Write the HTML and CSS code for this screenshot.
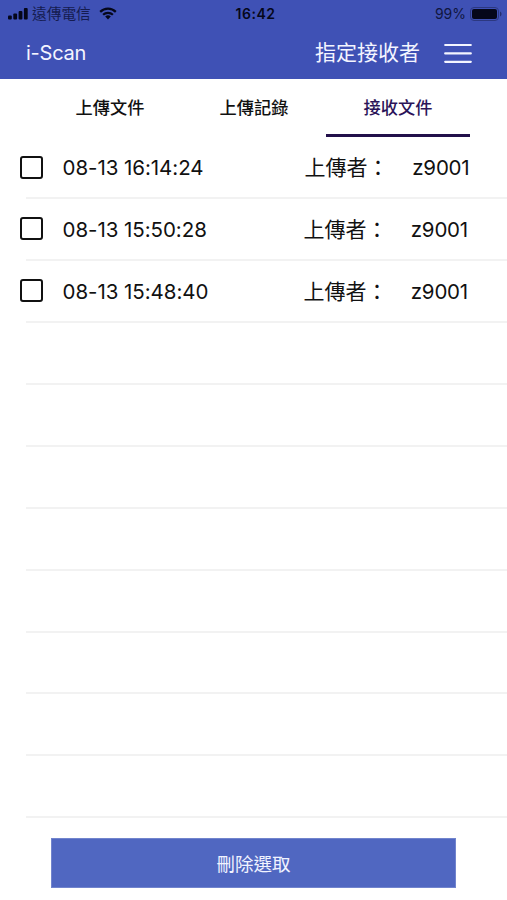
FILE: index.html
```
<!DOCTYPE html>
<html lang="zh-Hant">
<head>
    <meta charset="UTF-8">
    <meta name="viewport" content="width=device-width, initial-scale=1.0">
    <title>i-Scan</title>
    <link rel="stylesheet" href="styles.css">
</head>
<body>
    <header class="header">
        <!-- Status bar -->
        <div class="status-bar">
            <div class="status-left">
                <svg class="signal" width="20" height="12" viewBox="0 0 20 12">
                    <rect x="0" y="7.5" width="3.8" height="4" rx="1"/>
                    <rect x="5.3" y="5.5" width="3.8" height="6" rx="1"/>
                    <rect x="10.6" y="3" width="3.8" height="8.5" rx="1"/>
                    <rect x="15.9" y="0" width="3.8" height="11.5" rx="1"/>
                </svg>
                <span class="carrier">遠傳電信</span>
                <svg class="wifi" width="18" height="13" viewBox="0 0 18 13">
                    <path d="M1.2 4.9a11 11 0 0 1 15.6 0M4.1 7.8a7 7 0 0 1 9.8 0" fill="none" stroke="#05071a" stroke-width="2.2"/>
                    <path d="M9 12.4L6.2 9.6a4 4 0 0 1 5.6 0z"/>
                </svg>
            </div>
            <span class="clock">16:42</span>
            <div class="status-right">
                <span class="percent">99%</span>
                <svg class="battery" width="32" height="14" viewBox="0 0 32 14">
                    <rect x="0.5" y="0.5" width="28" height="13" rx="3.5" fill="none" stroke="#2c3880"/>
                    <rect x="2" y="2" width="25" height="10" rx="2"/>
                    <path d="M30 4.5c2 .8 2 4.2 0 5z" fill="#252f70"/>
                </svg>
            </div>
        </div>
        <!-- Title bar -->
        <div class="nav-bar">
            <h1 class="title">i-Scan</h1>
            <a class="receiver">指定接收者</a>
            <svg class="menu-icon" width="28" height="21" viewBox="0 0 28 21">
                <path d="M1.2 2h25.6M1.2 10.4h25.6M1.2 18.8h25.6"/>
            </svg>
        </div>
    </header>

    <nav class="tabs">
        <a class="tab">上傳文件</a>
        <a class="tab">上傳記錄</a>
        <a class="tab active">接收文件</a>
    </nav>

    <ul class="file-list">
        <li class="row first">
            <span class="checkbox"></span>
            <span class="time">08-13 16:14:24</span>
            <span class="label">上傳者：</span>
            <span class="user">z9001</span>
        </li>
        <li class="row">
            <span class="checkbox"></span>
            <span class="time">08-13 15:50:28</span>
            <span class="label">上傳者：</span>
            <span class="user">z9001</span>
        </li>
        <li class="row">
            <span class="checkbox"></span>
            <span class="time">08-13 15:48:40</span>
            <span class="label">上傳者：</span>
            <span class="user">z9001</span>
        </li>
        <!-- Empty rows -->
        <li class="row"></li>
        <li class="row"></li>
        <li class="row"></li>
        <li class="row"></li>
        <li class="row"></li>
        <li class="row"></li>
        <li class="row"></li>
        <li class="row"></li>
    </ul>

    <div class="footer">
        <button class="btn-delete">刪除選取</button>
    </div>
</body>
</html>
```
FILE: styles.css
```
* {
    box-sizing: border-box;
}

body {
    margin: 0;
    height: 900px;
    overflow: hidden;
    background-color: #fff;
    color: #111;
    font-family: Inter, "Noto Sans CJK TC", sans-serif;
}

/* Header */
.header {
    height: 79px;
    background-color: #3f51b5;
}

.status-bar {
    display: grid;
    grid-template-columns: 1fr auto 1fr;
    align-items: center;
    height: 27px;
    padding: 0 5px 0 8px;
    color: #05071a;
    fill: #05071a;
    font-size: 14px;
    line-height: 27px;
}

.status-left,
.status-right {
    display: flex;
    align-items: center;
}

.status-right {
    justify-content: flex-end;
}

.carrier {
    margin-left: 4px;
    padding-top: 2px;
    color: #151c50;
    font-size: 14.7px;
    line-height: 25px;
}

.wifi {
    margin-left: 8px;
}

.clock {
    padding-left: 1px;
    font-weight: 600;
    letter-spacing: 0.5px;
}

.percent {
    margin-right: 4px;
    color: #10163f;
}

.nav-bar {
    display: flex;
    align-items: center;
    height: 52px;
    padding: 0 35px 0 26px;
    color: #f4f5ff;
}

.title {
    flex: 1;
    margin: 0;
    font-size: 20px;
    font-weight: 400;
    letter-spacing: -0.25px;
}

.receiver {
    font-size: 21px;
    line-height: 52px;
}

.menu-icon {
    margin-left: 24px;
    fill: none;
    stroke: #f4f5ff;
    stroke-width: 2.2;
    stroke-linecap: round;
}

/* Tabs */
.tabs {
    display: flex;
    height: 58px;
    padding: 0 37px 0 38px;
}

.tab {
    flex: 1;
    border-bottom: 3px solid transparent;
    color: #111;
    font-size: 17.2px;
    font-weight: 500;
    line-height: 58px;
    text-align: center;
}

.tab.active {
    border-bottom-color: #22104a;
    color: #2b1459;
}

/* File list */
.file-list {
    margin: 0;
    padding: 0 0 0 26px;
    list-style: none;
}

.row {
    display: grid;
    grid-template-columns: 36.5px 241px 1fr auto;
    align-items: center;
    height: 61.95px;
    padding-right: 39px;
    border-bottom: 2px solid #f2f2f2;
    font-size: 20.5px;
    line-height: 58px;
}

.row.first {
    grid-template-columns: 36.5px 242px 1fr auto;
    padding-right: 37.5px;
}

.checkbox {
    width: 23px;
    height: 23px;
    margin-left: -6px;
    border: 2.5px solid #111;
    border-radius: 3px;
}

.time,
.label,
.user {
    padding-top: 2px;
}

.time {
    letter-spacing: -0.05px;
}

.label {
    font-size: 21px;
}

.user {
    letter-spacing: -0.2px;
}

/* Footer */
.footer {
    padding: 20px 51px 0;
}

.btn-delete {
    display: block;
    width: 405px;
    height: 50px;
    padding: 0;
    border: 1px solid #7184cd;
    background-color: #5067c1;
    color: #f0f3ff;
    font-family: inherit;
    font-size: 18.5px;
}
```
